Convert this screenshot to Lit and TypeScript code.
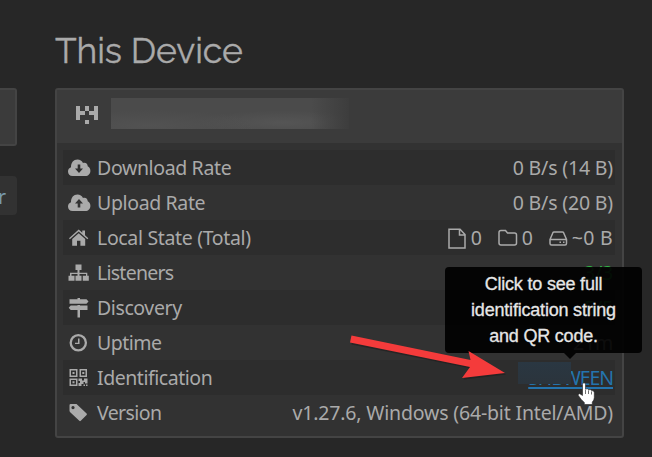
import { LitElement, html, css, svg } from "lit";
import { customElement } from "lit/decorators.js";

const CLOUD = "M4.600 17C1.700 17 0 15 0 12.400c0-2 1.200-3.600 3-4.200C3 3.500 5.600.500 9.400.500c2.600 0 4.600 1.300 5.600 3.400 2.500-.900 4.900.800 4.700 3.300 1.600.700 2.700 2.400 2.700 4.500C22.400 14.900 20.200 17 17.500 17z";
const icons: Record<string, unknown> = {
  down: svg`<path fill-rule="evenodd" d="${CLOUD}M9.700 5.500v4H7l4 4.500 4-4.500h-2.700v-4z"/>`,
  up: svg`<path fill-rule="evenodd" d="${CLOUD}M9.700 13.500v-4H7l4-4.500 4 4.500h-2.700v4z"/>`,
  home: svg`<path d="M1 9.200 10.700.500l3.600 3.300V1.500H17v4.700l3.300 3-.9 1L10.700 2.500 1.900 10.200z"/><path d="M4.200 10l6.500-5.800 6.500 5.800v6.700h-4.800v-5H9v5H4.200z"/>`,
  sitemap: svg`<path d="M7.500.500h6V6h-2v2.700h7.800v3h1.500v5h-6v-5H18V10h-6.500v1.700h2v5h-6v-5h2V10H3.500v1.700h3v5h-6v-5H2v-3h7.500V6h-2z"/>`,
  signs: svg`<path d="M9.500-1H12V.200h6.500l2 2.200-2 2.300h-17V.200h8zM9.500 6H12v.500h7.500V11H12v7.500H9.500V11H2.700l-2-2.200 2-2.300h6.800z"/>`,
  clock: svg`<circle cx="10.300" cy="8.700" r="7.600" fill="none" stroke="currentColor" stroke-width="2.300"/><path d="M10 4.500h1.500v5.500H7V8.700h3z"/>`,
  qr: svg`<path fill-rule="evenodd" d="M1.500 0h8v8h-8zm1.500 1.500v5h5v-5zM11.500 0h7.500v8h-7.500zm1.500 1.500v5h4.500v-5zM1.500 9.500h8v7.500h-8zm1.500 1.500v4.500h5V11zM4.500 3h2v2h-2zM14.300 3h2v2h-2zM4.500 12.300h2v2h-2zM10.500 9.500h3.500v2h2v-2h3.500v5H17V13h-1.500v2h-2v2h-3v-3h1.500v-2h-1.500zM15.500 15.500h1.500V17h-1.500zM18 15.500h1.500V17H18z"/>`,
  tag: svg`<path fill-rule="evenodd" d="M1.500 1.200Q1.500 0 2.700 0H8.500L18.600 9.600Q19.300 10.300 18.600 11.100L12.800 16.800Q12 17.500 11.300 16.800L2.200 8.200Q1.500 7.500 1.500 6.700zM5 2a1.600 1.600 0 1 0 .01 0z"/>`,
};

/* icon, label, label tracking in px */
const rows: [string, string, number][] = [
  ["down", "Download Rate", -0.36], ["up", "Upload Rate", -0.36], ["home", "Local State (Total)", -0.34], ["sitemap", "Listeners", -0.75],
  ["signs", "Discovery", -0.4], ["clock", "Uptime", -0.5], ["qr", "Identification", -0.46], ["tag", "Version", -0.6],
];

@customElement("app-root")
export class AppRoot extends LitElement {
  static styles = css`
    :host { display: block; position: relative; width: 652px; height: 457px; overflow: hidden; background: #272727; color: #aaa; font: 19.5px/35px "Noto Sans", sans-serif; letter-spacing: -0.17px; }
    * { box-sizing: border-box; }
    svg { display: block; fill: currentColor; flex: none; overflow: visible; }
    .page { display: flex; height: 100%; }
    .side { width: 17px; padding-top: 88px; margin-right: 38px; }
    .card { height: 58px; border: 2px solid #444; border-left: 0; border-radius: 0 3px 3px 0; background: #3b3b3b; }
    .button { margin-top: 30px; height: 39px; line-height: 41px; border-radius: 0 4px 4px 0; background: #323232; color: #7799ad; display: flex; justify-content: flex-end; padding-right: 11px; }
    .main { width: 569px; }
    h1 { margin: 0; padding-top: 26px; height: 88px; font: 400 35.500px/50px Raleway, Lato, sans-serif; letter-spacing: -0.1px; white-space: nowrap; -webkit-text-stroke: .35px #aaa; }
    .panel { height: 350px; border: 2px solid #444; border-radius: 3px; background: #323232; }
    .head { height: 53px; background: #3b3b3b; display: flex; padding: 8px 0 0 19px; }
    .head svg { margin-top: 8px; height: 18px; }
    .name { margin-left: 13px; width: 238px; height: 31px; background: linear-gradient(90deg, transparent 84%, #3d3d3d 100%), radial-gradient(ellipse at 16% 90%, #525252, transparent 40%), radial-gradient(ellipse at 72% 80%, #555, transparent 35%), #4b4b4b; }
    .rows { padding: 7px 7px 0 6px; }
    .row { height: 35px; padding: 0 2px 0 5px; display: flex; align-items: center; white-space: nowrap; }
    .row:nth-child(odd) { background: #2d2d2d; }
    .label { margin-left: 6px; flex: 1; }
    .row svg { margin-top: 2px; }
    .stats { display: flex; align-items: center; }
    .stats .gap { margin-left: 16px; }
    .stats span { margin-left: 4px; }
    .stats .wide { letter-spacing: .3px; }
    .green { color: #2fb344; }
    .link { color: #2474ae; position: relative; letter-spacing: -1.1px; text-decoration: underline; text-decoration-thickness: 2px; text-underline-offset: 2px; }
    .veil { position: absolute; left: -10px; top: 2px; width: 53px; height: 22px; background: linear-gradient(#2a3742, #2b343c); }
    .ver { letter-spacing: -0.17px; }
    .tip { position: absolute; left: 445px; top: 267px; width: 197px; height: 86px; padding-top: 4px; border-radius: 4px; background: rgba(0,0,0,.92); color: #e6e6e6; font: 18px/26px "Liberation Sans", Arial, sans-serif; letter-spacing: -0.2px; text-align: center; white-space: nowrap; -webkit-text-stroke: .3px #e6e6e6; }
    .tip::after { content: ""; position: absolute; left: 119px; top: 86px; border: 6px solid transparent; border-top-color: rgba(0,0,0,.92); border-bottom: 0; }
    .overlay { position: absolute; left: 0; top: 0; }
  `;

  value(i: number) {
    switch (i) {
      case 0: return html`<span>0 B/s (14 B)</span>`;
      case 1: return html`<span>0 B/s (20 B)</span>`;
      case 2: return html`<div class="stats">
        <svg width="19" height="20" viewBox="0 0 19 20"><path fill="none" stroke="currentColor" stroke-width="1.500" d="M1 .300h11l5 5.200v13.500H1zM11.500.500V6H17"/></svg><span>0</span>
        <svg class="gap" width="20" height="20" viewBox="0 0 20 20"><path fill="none" stroke="currentColor" stroke-width="1.500" d="M3 1.500h4.500l2 2.500h7Q18.500 4 18.500 6v8Q18.500 16 16.500 16H3Q1 16 1 14V3.500Q1 1.500 3 1.500z"/></svg><span>0</span>
        <svg class="gap" width="19" height="20" viewBox="0 0 19 20"><path fill="none" stroke="currentColor" stroke-width="1.500" d="M1 10.500 4 3.500Q4.300 3 5 3h8.500q.700 0 1 .500L17.500 10.500v4Q17.500 16 16 16H2.500Q1 16 1 14.500zM1 10.500h16.500M10.500 13.300H12M14 13.300h1.500"/></svg><span class="wide">~0 B</span></div>`;
      case 3: return html`<span class="green">3/3</span>`;
      case 4: return html`<span class="green">5/5</span>`;
      case 5: return html`21m`;
      case 6: return html`<span class="link">SHBWEEN<i class="veil"></i></span>`;
      default: return html`<span class="ver">v1.27.6, Windows (64-bit Intel/AMD)</span>`;
    }
  }

  render() {
    return html`<div class="page">
      <div class="side"><div class="card"></div><div class="button">r</div></div>
      <div class="main"><h1>This Device</h1>
        <div class="panel">
          <div class="head"><svg width="22" height="18" viewBox="0 0 5 4" preserveAspectRatio="none" shape-rendering="crispEdges"><path d="M0 0h1v1h1v1H1v1H0zM2 0h1v1H2zM4 0h1v3H4V2H3V1h1zM2 3h1v1H2z"/></svg><div class="name"></div></div>
          <div class="rows">${rows.map(([ic, l, track], i) => html`<div class="row"><svg width="23" height="19" viewBox="0 0 23 19">${icons[ic]}</svg><span class="label" style="letter-spacing:${track}px">${l}</span>${this.value(i)}</div>`)}</div>
        </div>
      </div>
    </div>
    <div class="tip">Click to see full<br>identification string<br>and QR code.</div>
    <svg class="overlay" width="652" height="457" viewBox="0 0 652 457">
      <path fill="#1d1d1d" opacity=".6" d="M352 337 470.500 361.500 469.500 353 506 374.500 463.500 379.500 471 368.500 351.500 344.500z"/>
      <path fill="#f43b3b" d="M351.500 335.500 470.500 360 468.500 351 505 373 462 378 470 367 350 342.500z"/>
      <path fill="#fff" stroke="#222" stroke-width=".6" d="M582.500 384.500q0-1.800 1.500-1.800t1.500 1.800v4.500q2.300-.8 3 .8 2.200-.8 3 .8 2.500-.4 2.800 2v5q0 2.500-2 4.500v2.400h-8v-2q-3-2.500-6-7-.7-2 1.500-1.800l2.700 1.800z"/>
      <path fill="none" stroke="#333" stroke-width=".7" d="M585.500 389.500v4.500M588.500 390.500v3.500M591.500 391.500v3"/>
    </svg>`;
  }
}
